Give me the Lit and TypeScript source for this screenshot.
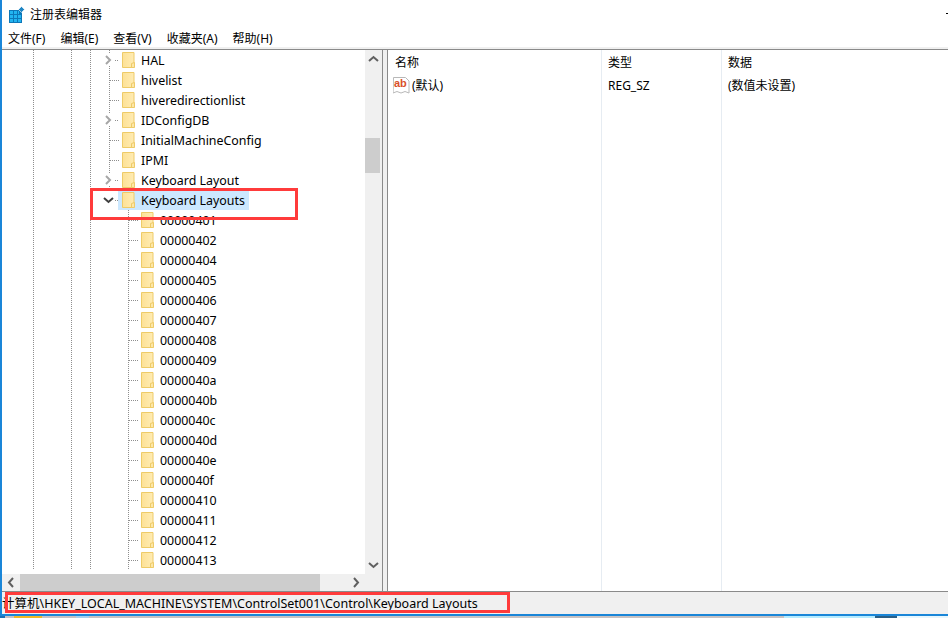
import { LitElement, html, css } from "lit";
import { customElement } from "lit/decorators.js";

const upper: [string, boolean][] = [
  ["HAL", true], ["hivelist", false], ["hiveredirectionlist", false], ["IDConfigDB", true],
  ["InitialMachineConfig", false], ["IPMI", false], ["Keyboard Layout", true],
];
const kids = ["00000401","00000402","00000404","00000405","00000406","00000407","00000408","00000409","0000040a","0000040b","0000040c","0000040d","0000040e","0000040f","00000410","00000411","00000412","00000413"];

const folder = html`<svg class="folder" width="13" height="16" viewBox="0 0 13 16">
  <defs><linearGradient id="fg" x1="0" x2="1" y1="0" y2="0"><stop offset="0" stop-color="#fde196"/><stop offset="1" stop-color="#ffecb4"/></linearGradient></defs>
  <path d="M.5.5h11.500v15H.5z" fill="url(#fg)" stroke="#eecb68"/>
  <path d="M9.500 15.500v-4l3-1v5z" fill="#fde7a6" stroke="#eecb68"/>
</svg>`;
const right = html`<svg class="chev" width="9" height="12" viewBox="0 0 9 12"><path d="M2 2l4 4-4 4" fill="none" stroke="#a6a6a6" stroke-width="2"/></svg>`;
const down = html`<svg class="chev dn" width="11" height="12" viewBox="0 0 11 12"><path d="M1 4l4.500 4 4.500-4" fill="none" stroke="#404040" stroke-width="2"/></svg>`;

@customElement("app-root")
export class AppRoot extends LitElement {
  static styles = css`
    :host { display: block; position: relative; width: 948px; height: 618px; overflow: hidden; background: #fff;
      font-family: "Noto Sans", "Noto Sans CJK SC", sans-serif; font-size: 12px; color: #000; }
    .screen { display: flex; flex-direction: column; height: 618px; }
    .win { flex: 1; min-height: 0; display: flex; flex-direction: column; border-left: 2px solid #1a86d8; }
    .title { height: 28px; display: flex; align-items: center; padding-left: 7px; gap: 5px; background: #fff; }
    .title .name { flex: 1; font-size: 12px; }
    .min { width: 2px; height: 1px; background: #000; align-self: flex-start; margin-top: 13px; }
    .menu { height: 18px; padding-top: 1px; display: flex; align-items: center; padding-left: 6px; gap: 15px; background: #fff; }
    .band { height: 2px; background: #f0f0f0; }
    .panes { flex: 1; min-height: 0; display: flex; border-top: 1px solid #8a8a8a; border-bottom: 1px solid #8a8a8a; }
    .left { width: 380px; flex: none; display: grid; grid-template-columns: 363px 17px; grid-template-rows: 1fr 17px; border-right: 1px solid #8a8a8a; min-height: 0; }
    .split { width: 4px; flex: none; background: #f0f0f0; }
    .right { flex: 1; border-left: 1px solid #8a8a8a; display: grid; grid-template-columns: 213px 120px 1fr; grid-template-rows: 26px 1fr; position: relative; min-width: 0; }
    .tree { overflow: hidden; min-height: 0; padding-left: 3px; background: #fff; }
    .row { height: 20px; display: flex; align-items: center; font-size: 12.4px; white-space: nowrap; }
    .cell { width: 19px; height: 20px; flex: none; display: flex; align-items: center; justify-content: center; }
    .v { background: repeating-linear-gradient(to bottom, #8e8e8e 0 1px, transparent 1px 2px) 9px 0 / 1px 100% no-repeat; }
    .b { background:
      repeating-linear-gradient(to right, #8e8e8e 0 1px, transparent 1px 2px) 10px 10px / 9px 1px no-repeat,
      repeating-linear-gradient(to bottom, #8e8e8e 0 1px, transparent 1px 2px) 9px 0 / 1px 100% no-repeat; }
    .t { background: repeating-linear-gradient(to right, #8e8e8e 0 1px, transparent 1px 2px) 15px 10px / 4px 1px no-repeat,
      repeating-linear-gradient(to bottom, #8e8e8e 0 1px, transparent 1px 2px) 9px 0 / 1px 100% no-repeat; }
    .tlast { background: repeating-linear-gradient(to right, #8e8e8e 0 1px, transparent 1px 2px) 15px 10px / 4px 1px no-repeat; }
    .chev { background: #fff; display: block; margin-right: 2px; }
    .chev.dn { margin-right: 3px; }
    .item { display: flex; align-items: center; gap: 6px; height: 20px; padding-left: 3px; padding-right: 4px; }
    .sel { background: #cce8ff; margin-left: -1px; padding-left: 4px; }
    .folder { display: block; flex: none; }
    .vbar { background: #f0f0f0; display: flex; flex-direction: column; min-height: 0; }
    .hbar { background: #f0f0f0; display: flex; grid-column: 1 / 3; }
    .arrow { width: 17px; height: 17px; flex: none; display: flex; align-items: center; justify-content: center; }
    .vtrack { flex: 1; padding-top: 71px; }
    .vthumb { width: 15px; height: 35px; background: #cdcdcd; }
    .htrack { flex: 1; display: flex; }
    .hthumb { width: 300px; margin-left: 1px; background: #cdcdcd; }
    .hbar .arrow.end { margin-right: 17px; }
    .head { padding: 4px 0 0 6px; font-size: 12px; line-height: 17px; border-left: 1px solid #e6ecf2; }
    .col { padding: 0 0 0 6px; border-left: 1px solid #e6ecf2; font-size: 12px; line-height: 17px; }
    .col.first, .head.first { border-left: 0; }
    .head.first { padding-left: 7px; }
    .val { display: flex; align-items: center; gap: 2px; height: 17px; margin-top: 1px; }
    .col.first { padding-left: 5px; }
    .status { height: 21px; padding-bottom: 2px; display: flex; align-items: center; background: #f0f0f0; font-size: 12.5px; white-space: nowrap; overflow: hidden; }
    .blue { height: 2px; background: #1a86d8; margin-top: -1px; }
    .task { height: 2px; display: flex; flex: none; }
    .task span { display: block; flex: none; }
    .t1 { width: 5px; background: #1a6fb5; } .t2 { width: 9px; background: #c8c2c2; } .t3 { width: 28px; background: #f2b824; }
    .t4 { width: 34px; background: #c8c2c2; } .t5 { width: 13px; background: #a8d0ea; } .t6 { width: 695px; background: #c8c2c2; }
    .t7 { width: 91px; background: #b5ecff; } .t8 { width: 22px; background: #2a5f86; } .t9 { width: 51px; background: #e8f8ff; }
    .mark { position: absolute; border: 3px solid #ff3b3b; box-sizing: border-box; pointer-events: none; }
    .m1 { left: 90px; top: 188px; width: 208px; height: 32px; }
    .m2 { left: 5px; top: 592px; width: 505px; height: 21px; }
  `;

  private row(name: string, chev: boolean) {
    return html`<div class="row"><span class="cell"></span><span class="cell v"></span><span class="cell"></span><span class="cell v"></span><span class="cell v"></span>
      <span class="cell ${chev ? "t" : "b"}">${chev ? right : ""}</span>
      <span class="item">${folder}<span>${name}</span></span></div>`;
  }

  private kid(name: string) {
    return html`<div class="row"><span class="cell"></span><span class="cell v"></span><span class="cell"></span><span class="cell v"></span><span class="cell v"></span><span class="cell"></span><span class="cell b"></span>
      <span class="item">${folder}<span>${name}</span></span></div>`;
  }

  render() {
    return html`<div class="screen">
      <div class="win">
        <div class="title">
          <svg width="16" height="17" viewBox="0 0 16 17">
            <path d="M0 4h13v13H0z" fill="#0d77b8"/>
            <path d="M1 5h3v3H1zM5 5h3v3H5zM1 9h3v3H1zM5 9h3v3H5zM9 9h3v3H9zM1 13h3v3H1zM5 13h3v3H5zM9 13h3v3H9z" fill="#22b4f0"/>
            <path d="M9 5h1v3H9z" fill="#22b4f0"/>
            <path d="M9.500 3.500l3-3 3 3-3 3z" fill="#1f86c4" stroke="#fff" stroke-width=".6"/>
          </svg>
          <span class="name">注册表编辑器</span><span class="min"></span>
        </div>
        <div class="menu"><span>文件(F)</span><span>编辑(E)</span><span>查看(V)</span><span>收藏夹(A)</span><span>帮助(H)</span></div>
        <div class="band"></div>
        <div class="panes">
          <div class="left">
            <div class="tree">
              ${upper.map(([n, c]) => this.row(n, c))}
              <div class="row"><span class="cell"></span><span class="cell v"></span><span class="cell"></span><span class="cell v"></span><span class="cell v"></span>
                <span class="cell tlast">${down}</span>
                <span class="item sel">${folder}<span>Keyboard Layouts</span></span></div>
              ${kids.map((k) => this.kid(k))}
            </div>
            <div class="vbar">
              <div class="arrow"><svg width="11" height="9" viewBox="0 0 11 9"><path d="M1 7l4.500-4 4.500 4" fill="none" stroke="#606060" stroke-width="2"/></svg></div>
              <div class="vtrack"><div class="vthumb"></div></div>
              <div class="arrow"><svg width="11" height="9" viewBox="0 0 11 9"><path d="M1 2l4.500 4 4.500-4" fill="none" stroke="#606060" stroke-width="2"/></svg></div>
            </div>
            <div class="hbar">
              <div class="arrow"><svg width="9" height="11" viewBox="0 0 9 11"><path d="M7 1L3 5.500l4 4.500" fill="none" stroke="#606060" stroke-width="2"/></svg></div>
              <div class="htrack"><div class="hthumb"></div></div>
              <div class="arrow end"><svg width="9" height="11" viewBox="0 0 9 11"><path d="M2 1l4 4.500-4 4.500" fill="none" stroke="#606060" stroke-width="2"/></svg></div>
            </div>
          </div>
          <div class="split"></div>
          <div class="right">
            <div class="head first">名称</div><div class="head">类型</div><div class="head">数据</div>
            <div class="col first"><div class="val">
              <svg width="17" height="17" viewBox="0 0 17 17"><path d="M.5.5h12l3.500 3.500v12l-4-1.500-4 1.500-4-1.500-4 1.500z" fill="#fff" stroke="#b8b8b8"/><text x="1" y="10" font-family="Liberation Sans" font-weight="700" font-size="11" fill="#d9502a">ab</text></svg>
              <span>(默认)</span></div></div>
            <div class="col"><div class="val">REG_SZ</div></div>
            <div class="col"><div class="val">(数值未设置)</div></div>
          </div>
        </div>
        <div class="status">计算机\\HKEY_LOCAL_MACHINE\\SYSTEM\\ControlSet001\\Control\\Keyboard Layouts</div>
      </div>
      <div class="blue"></div>
      <div class="task"><span class="t1"></span><span class="t2"></span><span class="t3"></span><span class="t4"></span><span class="t5"></span><span class="t6"></span><span class="t7"></span><span class="t8"></span><span class="t9"></span></div>
      <div class="mark m1"></div><div class="mark m2"></div>
    </div>`;
  }
}
